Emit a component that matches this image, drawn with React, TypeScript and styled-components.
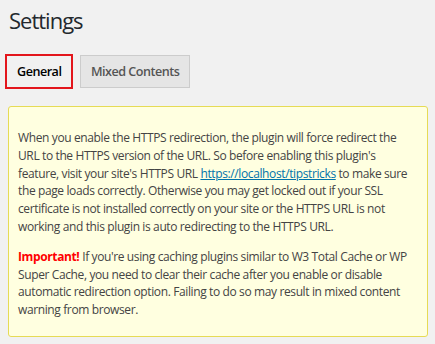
import React from 'react';
import styled, { createGlobalStyle } from 'styled-components';

const GlobalStyle = createGlobalStyle`
  body {
    margin: 0;
    background: #f1f1f1;
    font-family: 'Open Sans', 'Noto Sans', sans-serif;
    color: #444;
  }
`;

const Page = styled.div`
  padding: 0 7px 0 8px;
`;

const Title = styled.h1`
  margin: 0;
  padding: 5px 0 0 1px;
  font-size: 22px;
  font-weight: 400;
  line-height: 30px;
  color: #23282d;
  letter-spacing: -1px;
`;

const Tabs = styled.div`
  display: flex;
  gap: 7px;
  margin: 19px 0 0 -3px;
`;

const Tab = styled.div<{ active?: boolean }>`
  box-sizing: border-box;
  height: ${p => (p.active ? '35px' : '33px')};
  margin-top: ${p => (p.active ? '0' : '1px')};
  padding: 0 ${p => (p.active ? '10px' : '9.5px')};
  display: flex;
  align-items: center;
  font-size: 12.6px;
  font-weight: 600;
  letter-spacing: -0.5px;
  color: ${p => (p.active ? '#000' : '#555')};
  background: ${p => (p.active ? '#f1f1f1' : '#e5e5e5')};
  border: ${p => (p.active ? '2px solid #e3161c' : '1px solid #ccc')};
`;

const Notice = styled.div`
  margin-top: 17px;
  padding: 10px 10px 6px 9px;
  background: #ffffe0;
  border: 1px solid #e6db55;
  border-radius: 3px;
`;

const Para = styled.p`
  margin: 12px 0 11px;
  font-size: 12px;
  line-height: 17.8px;
  letter-spacing: -0.38px;
  color: #444;
`;

const Link = styled.a`
  color: #0073aa;
  text-decoration: underline;
`;

const Warn = styled.strong`
  color: #f00;
  font-weight: 700;
`;

export default function App() {
  return (
    <Page>
      <GlobalStyle />
      <Title>Settings</Title>
      <Tabs>
        <Tab active>General</Tab>
        <Tab>Mixed Contents</Tab>
      </Tabs>
      <Notice>
        <Para>
          When you enable the HTTPS redirection, the plugin will force redirect the URL to the
          HTTPS version of the URL. So before enabling this plugin's feature, visit your site's
          HTTPS URL <Link href="#">https://localhost/tipstricks</Link> to make sure the page loads
          correctly. Otherwise you may get locked out if your SSL certificate is not installed
          correctly on your site or the HTTPS URL is not working and this plugin is auto
          redirecting to the HTTPS URL.
        </Para>
        <Para>
          <Warn>Important!</Warn> If you're using caching plugins similar to W3 Total Cache or WP
          Super Cache, you need to clear their cache after you enable or disable automatic
          redirection option. Failing to do so may result in mixed content warning from browser.
        </Para>
      </Notice>
    </Page>
  );
}
